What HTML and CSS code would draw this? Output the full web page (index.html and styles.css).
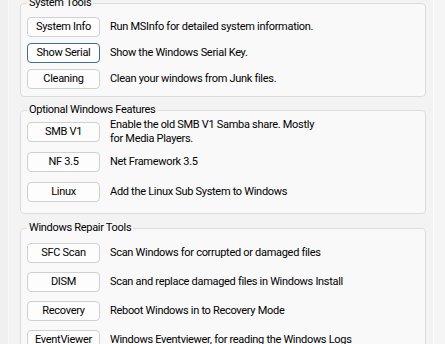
FILE: index.html
```html
<!DOCTYPE html>
<html>
<head>
<meta charset="utf-8">
<link rel="stylesheet" href="styles.css">
</head>
<body>
<div class="window">
  <div class="panel">
    <fieldset class="group g1">
      <legend>System Tools</legend>
      <div class="row"><button class="btn">System Info</button><span class="desc">Run MSInfo for detailed system information.</span></div>
      <div class="row"><button class="btn focus">Show Serial</button><span class="desc">Show the Windows Serial Key.</span></div>
      <div class="row"><button class="btn">Cleaning</button><span class="desc">Clean your windows from Junk files.</span></div>
    </fieldset>
    <fieldset class="group g2">
      <legend>Optional Windows Features</legend>
      <div class="row"><button class="btn">SMB V1</button><span class="desc">Enable the old SMB V1 Samba share. Mostly<br>for Media Players.</span></div>
      <div class="row"><button class="btn">NF 3.5</button><span class="desc">Net Framework 3.5</span></div>
      <div class="row"><button class="btn">Linux</button><span class="desc">Add the Linux Sub System to Windows</span></div>
    </fieldset>
    <fieldset class="group g3">
      <legend>Windows Repair Tools</legend>
      <div class="row"><button class="btn">SFC Scan</button><span class="desc">Scan Windows for corrupted or damaged files</span></div>
      <div class="row"><button class="btn">DISM</button><span class="desc">Scan and replace damaged files in Windows Install</span></div>
      <div class="row"><button class="btn">Recovery</button><span class="desc">Reboot Windows in to Recovery Mode</span></div>
      <div class="row"><button class="btn">EventViewer</button><span class="desc">Windows Eventviewer, for reading the Windows Logs</span></div>
    </fieldset>
  </div>
  <div class="side"></div>
</div>
</body>
</html>
```
FILE: styles.css
```css
html, body {
  margin: 0;
  padding: 0;
  background: #f0f0f0;
  overflow: hidden;
}
body {
  width: 445px;
  height: 344px;
  font-family: Roboto, "Liberation Sans", sans-serif;
  font-size: 11px;
  letter-spacing: -0.3px;
  color: #000;
}
.window {
  display: flex;
  height: 344px;
  padding-left: 8px;
  box-sizing: border-box;
}
.panel {
  width: 426px;
  box-sizing: border-box;
  border-left: 1px solid #f8f8f8;
  border-right: 1px solid #fbfbfb;
  background: #f3f3f3;
  padding: 0 7px 0 11px;
  overflow: hidden;
}
.side {
  flex: 1;
  background: #f5f5f5;
}
.group {
  margin: 0;
  border: 1px solid #dcdcdc;
  border-radius: 4px;
  background: #f9f9f9;
  padding: 0 0 0 6px;
  display: flex;
  flex-direction: column;
}
.group legend {
  padding: 0 2px;
  line-height: 16px;
  font-size: 11px;
}
.g1 {
  margin-top: -5px;
  padding-top: 6px;
  padding-bottom: 7px;
  gap: 6px;
}
.g2 {
  margin-top: 5px;
  padding-top: 4px;
  padding-bottom: 11px;
  gap: 10px;
}
.g3 {
  margin-top: 6px;
  padding-top: 7px;
  gap: 9px;
}
.row {
  display: flex;
  align-items: center;
  height: 20px;
  gap: 10px;
}
.btn {
  flex: none;
  width: 73px;
  height: 20px;
  box-sizing: border-box;
  margin: 0;
  padding: 0;
  border: 1px solid #d0d0d0;
  border-radius: 4px;
  background: #fdfdfd;
  font-family: inherit;
  font-size: 11px;
  letter-spacing: inherit;
  color: #000;
  line-height: 18px;
  text-align: center;
}
.btn.focus {
  border-color: #3d6f93;
}
.desc {
  white-space: nowrap;
  line-height: 14px;
}
```
